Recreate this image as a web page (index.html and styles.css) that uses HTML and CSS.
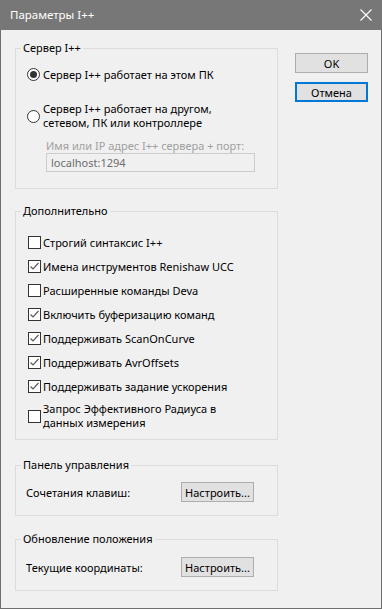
FILE: index.html
```html
<!DOCTYPE html>
<html>
<head>
<meta charset="utf-8">
<title>Параметры I++</title>
<link rel="stylesheet" href="styles.css">
</head>

<body>

<div id="window">
    <div class="titlebar">
        <span class="title">Параметры I++</span>
        <svg class="close" width="12" height="12" viewBox="0 0 12 12">
            <path d="M0.5 0.5 L11.5 11.5 M11.5 0.5 L0.5 11.5" stroke="#fff" stroke-width="1.1" fill="none"/>
        </svg>
    </div>

    <div id="content">
        <div class="left">
            <fieldset class="group server">
                <legend>Сервер I++</legend>
                <div class="option first">
                    <span class="radio checked"></span>
                    <span class="label">Сервер I++ работает на этом ПК</span>
                </div>
                <div class="option second">
                    <span class="radio"></span>
                    <span class="label two_lines">Сервер I++ работает на другом,<br>сетевом, ПК или контроллере</span>
                </div>
                <div class="addr_caption">Имя или IP адрес I++ сервера + порт:</div>
                <div class="addr_input">localhost:1294</div>
            </fieldset>

            <fieldset class="group extra">
                <legend>Дополнительно</legend>
                <div class="check_row">
                    <span class="check"></span>
                    <span class="label">Строгий синтаксис I++</span>
                </div>
                <div class="check_row">
                    <span class="check"><svg width="11" height="11" viewBox="0 0 11 11"><path d="M1.5 5.5 L4 8 L9.5 2" stroke="#5a5a5a" stroke-width="1.2" fill="none"/></svg></span>
                    <span class="label">Имена инструментов Renishaw UCC</span>
                </div>
                <div class="check_row">
                    <span class="check"></span>
                    <span class="label">Расширенные команды Deva</span>
                </div>
                <div class="check_row">
                    <span class="check"><svg width="11" height="11" viewBox="0 0 11 11"><path d="M1.5 5.5 L4 8 L9.5 2" stroke="#5a5a5a" stroke-width="1.2" fill="none"/></svg></span>
                    <span class="label">Включить буферизацию команд</span>
                </div>
                <div class="check_row">
                    <span class="check"><svg width="11" height="11" viewBox="0 0 11 11"><path d="M1.5 5.5 L4 8 L9.5 2" stroke="#5a5a5a" stroke-width="1.2" fill="none"/></svg></span>
                    <span class="label">Поддерживать ScanOnCurve</span>
                </div>
                <div class="check_row">
                    <span class="check"><svg width="11" height="11" viewBox="0 0 11 11"><path d="M1.5 5.5 L4 8 L9.5 2" stroke="#5a5a5a" stroke-width="1.2" fill="none"/></svg></span>
                    <span class="label">Поддерживать AvrOffsets</span>
                </div>
                <div class="check_row">
                    <span class="check"><svg width="11" height="11" viewBox="0 0 11 11"><path d="M1.5 5.5 L4 8 L9.5 2" stroke="#5a5a5a" stroke-width="1.2" fill="none"/></svg></span>
                    <span class="label">Поддерживать задание ускорения</span>
                </div>
                <div class="check_row last">
                    <span class="check"></span>
                    <span class="label two_lines">Запрос Эффективного Радиуса в<br>данных измерения</span>
                </div>
            </fieldset>

            <fieldset class="group small">
                <legend>Панель управления</legend>
                <div class="setting_row">
                    <span class="setting_name">Сочетания клавиш:</span>
                    <span class="button setup">Настроить...</span>
                </div>
            </fieldset>

            <fieldset class="group small last_group">
                <legend>Обновление положения</legend>
                <div class="setting_row">
                    <span class="setting_name">Текущие координаты:</span>
                    <span class="button setup">Настроить...</span>
                </div>
            </fieldset>
        </div>

        <div class="right">
            <span class="button dialog_btn">OK</span>
            <span class="button dialog_btn focused">Отмена</span>
        </div>
    </div>
</div>

</body>
</html>
```

FILE: styles.css
```css
body {
    margin: 0;
    padding: 0;
    background: #f0f0f0;
    font: 11px/15px "Noto Sans", "Liberation Sans", sans-serif;
    color: #000;
}
#window {
    width: 382px;
    height: 609px;
    box-sizing: border-box;
    border: 1px solid #6f6f6f;
    border-top: none;
    background: #f0f0f0;
}
.titlebar {
    height: 30px;
    margin: 0 -1px;
    background: #777777;
    color: #fff;
    font-size: 11.5px;
    display: flex;
    align-items: center;
    justify-content: space-between;
    padding: 0 10px 0 10px;
}
.title {
    margin-top: -1px;
}
.close {
    display: block;
}
#content {
    display: flex;
    padding: 10px 0 0 14px;
}
.left {
    width: 263px;
    display: flex;
    flex-direction: column;
}
.right {
    margin-left: 17px;
    padding-top: 13px;
    display: flex;
    flex-direction: column;
    gap: 9px;
}
.group {
    margin: 0;
    padding: 0 0 0 11px;
    border: 1px solid #dcdcdc;
    min-width: 0;
}
.group legend {
    padding: 0 2px;
    margin-left: -6px;
    line-height: 16px;
}
.option, .check_row {
    display: flex;
    align-items: center;
    height: 13px;
}
.option.first {
    margin-top: 12px;
}
.option.second {
    margin-top: 21px;
    height: 28px;
}
.radio {
    width: 13px;
    height: 13px;
    box-sizing: border-box;
    border: 1px solid #333;
    border-radius: 50%;
    background: #fff;
    display: flex;
    align-items: center;
    justify-content: center;
    flex-shrink: 0;
}
.radio.checked::after {
    content: "";
    width: 7px;
    height: 7px;
    border-radius: 50%;
    background: #333;
}
.label {
    margin-left: 3px;
    white-space: nowrap;
}
.two_lines {
    line-height: 14px;
}
.addr_caption {
    margin: 9px 0 0 19px;
    line-height: 14px;
    color: #a0a0a0;
}
.addr_input {
    margin: 0 0 16px 19px;
    width: 209px;
    height: 19px;
    box-sizing: border-box;
    border: 1px solid #cccccc;
    padding-left: 4px;
    line-height: 17px;
    color: #6d6d6d;
}
.extra {
    margin-top: 14px;
    padding-left: 12px;
    padding-bottom: 9px;
}
.extra legend {
    margin-left: -7px;
}
.check_row {
    margin-top: 11px;
}
.extra legend + .check_row {
    margin-top: 17px;
}
.check_row.last {
    height: 28px;
    margin-top: 9px;
}
.check {
    width: 13px;
    height: 13px;
    box-sizing: border-box;
    border: 1px solid #333;
    background: #fff;
    display: flex;
    align-items: center;
    justify-content: center;
    flex-shrink: 0;
}
.check svg {
    display: block;
}
.check + .label {
    margin-left: 2px;
}
.small {
    margin-top: 17px;
    padding: 9px 0 13px 10px;
}
.small legend {
    margin-left: -5px;
}
.last_group {
    margin-top: 15px;
    padding-top: 10px;
}
.setting_row {
    display: flex;
    align-items: center;
    justify-content: space-between;
    padding-right: 23px;
}
.setting_name {
    padding-top: 1px;
}
.button {
    display: flex;
    align-items: center;
    justify-content: center;
    box-sizing: border-box;
    background: #e1e1e1;
    border: 1px solid #adadad;
    white-space: nowrap;
}
.setup {
    width: 73px;
    height: 20px;
}
.dialog_btn {
    width: 73px;
    height: 20px;
}
.dialog_btn.focused {
    border: 2px solid #0078d7;
}
```
